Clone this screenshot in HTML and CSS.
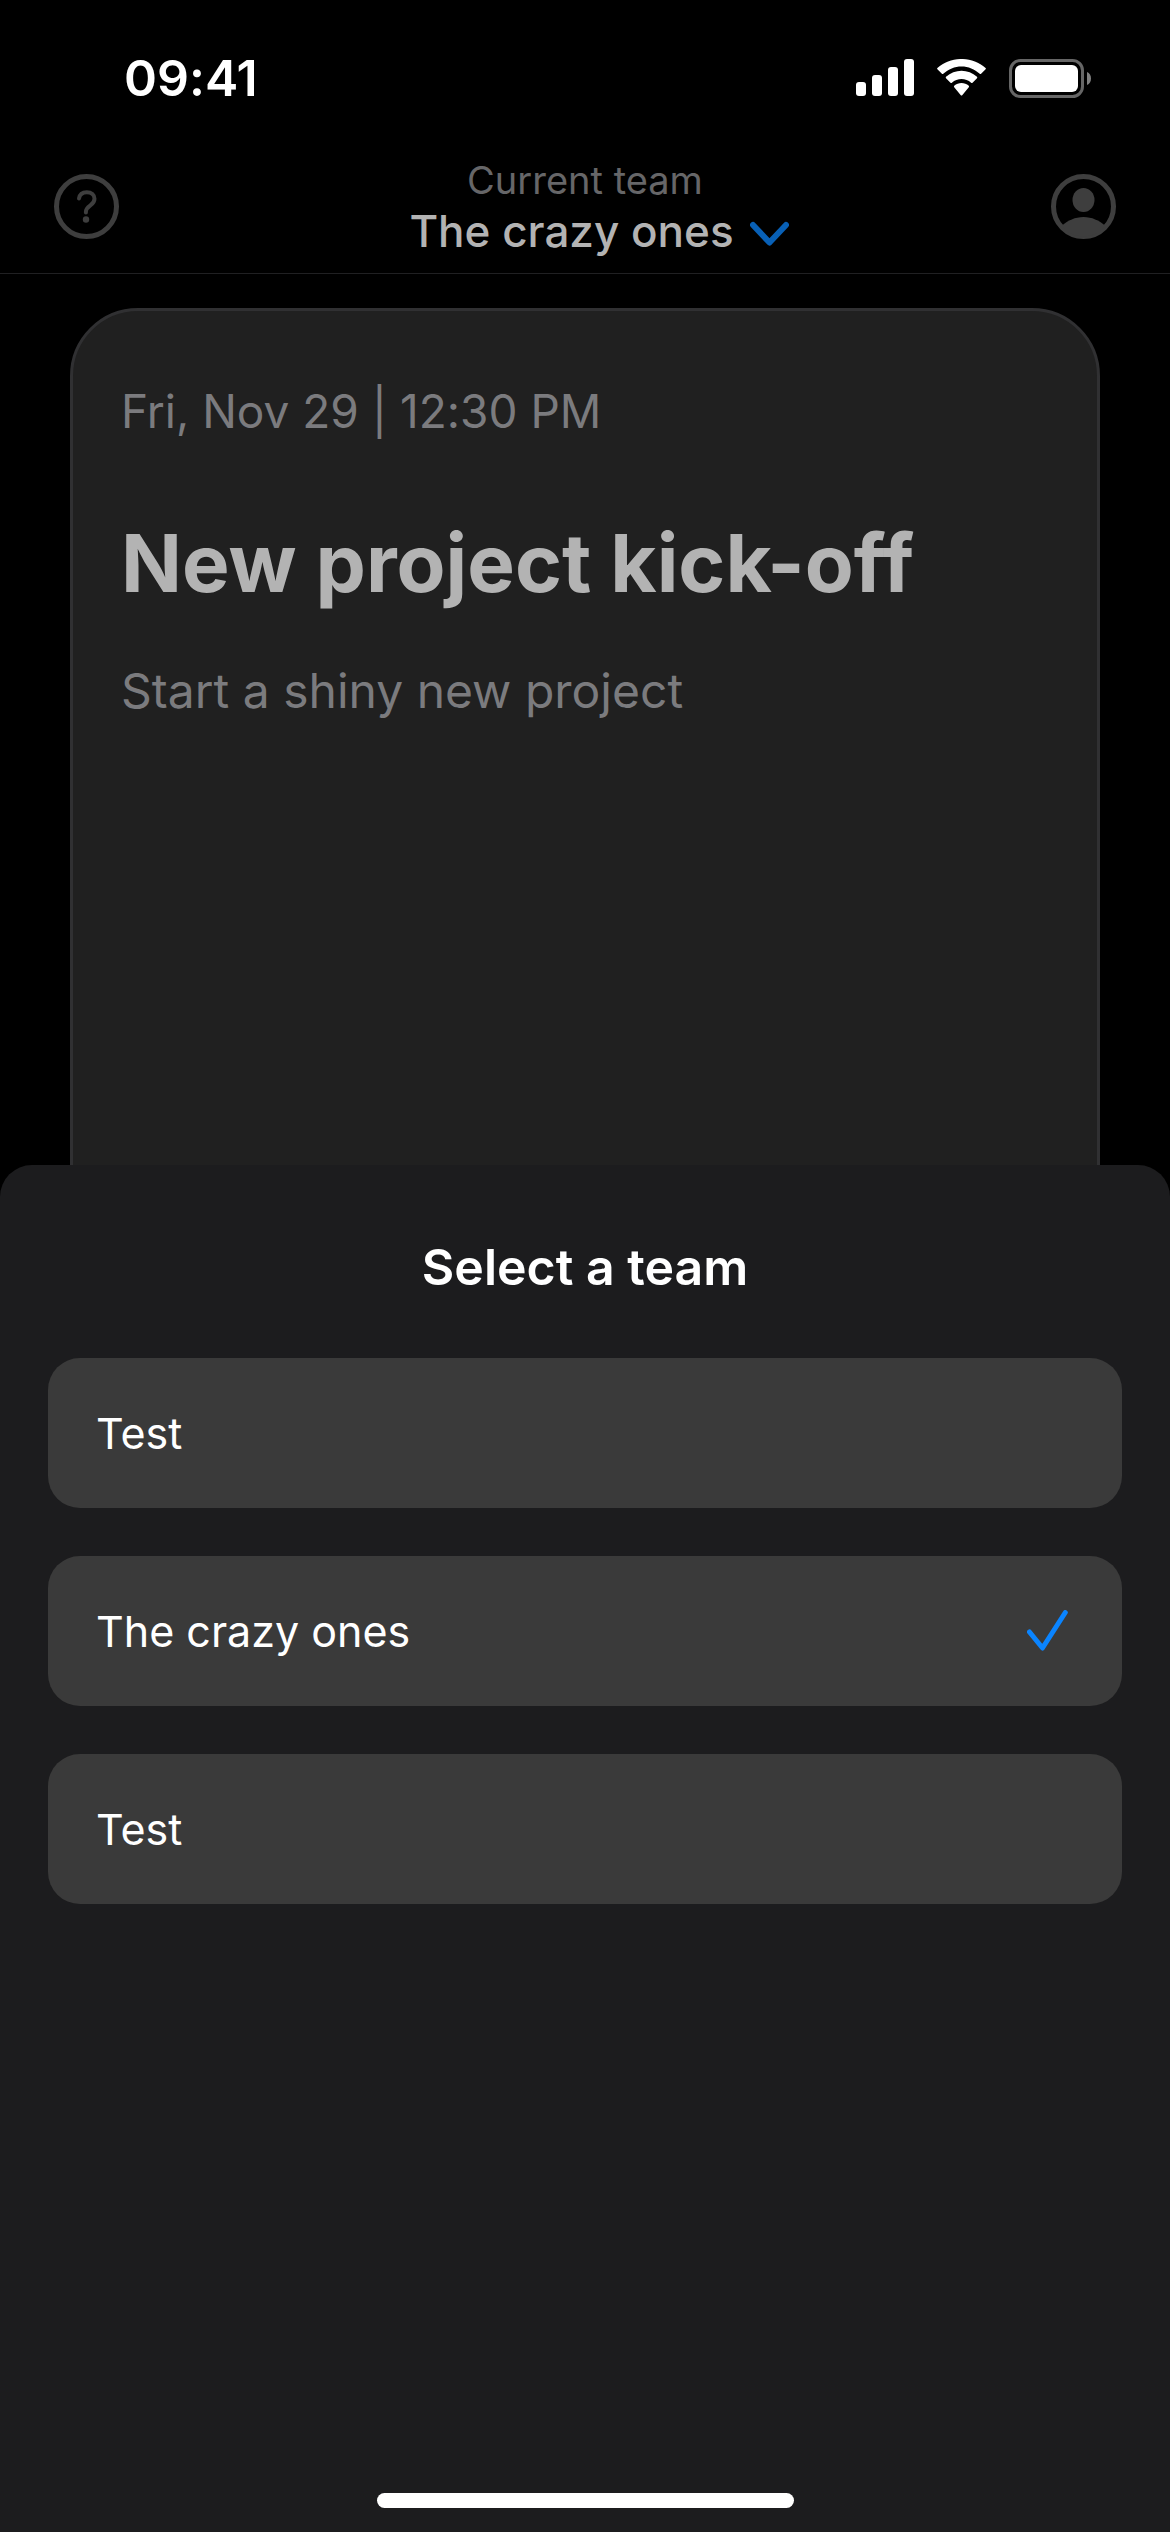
FILE: index.html
```html
<!DOCTYPE html>
<html lang="en">
<head>
  <meta charset="utf-8">
  <meta name="viewport" content="width=device-width, initial-scale=1">
  <title>Select a team</title>
  <link rel="stylesheet" href="styles.css">
</head>
<body>
  <div class="screen">
    <div class="status-bar">
      <time class="status-time">09:41</time>
      <div class="status-icons">
        <svg width="58" height="39" viewBox="0 0 58 39" fill="#fff" aria-hidden="true">
          <rect x="0" y="23" width="10" height="14" rx="3"/>
          <rect x="16" y="16" width="10" height="21" rx="3"/>
          <rect x="32" y="8" width="10" height="29" rx="3"/>
          <rect x="48" y="0" width="10" height="37" rx="3"/>
        </svg>
        <svg width="51" height="39" viewBox="0 0 51 39" fill="#fff" aria-hidden="true">
          <path d="M25.500 7.500c6.800 0 13.200 2.600 18.200 7.300.4.400 1 .4 1.400 0l4.500-4.500c.4-.4.400-1 0-1.400C36.100-3 14.900-3 1.400 8.900c-.4.400-.4 1 0 1.400l4.500 4.500c.4.400 1 .4 1.400 0 5-4.700 11.400-7.300 18.200-7.300z"/>
          <path d="M25.500 20.100c3.500 0 6.900 1.300 9.600 3.700.4.400 1 .4 1.400 0l4.500-4.500c.4-.4.400-1.100 0-1.500-8.700-8.100-22.200-8.100-31 0-.4.400-.4 1.100 0 1.500l4.500 4.500c.4.400 1 .4 1.400 0 2.700-2.400 6.100-3.700 9.600-3.700z"/>
          <path d="M32.800 28.200c.4-.4.400-1.100 0-1.500-4.200-3.600-10.400-3.600-14.600 0-.4.400-.4 1.100 0 1.500l6.600 8c.4.500 1 .5 1.400 0z"/>
        </svg>
        <svg width="83" height="39" viewBox="0 0 83 39" aria-hidden="true">
          <rect x="1.500" y="1.500" width="72" height="36" rx="10" fill="none" stroke="#666" stroke-width="3"/>
          <rect x="6" y="6" width="63" height="27" rx="6" fill="#fff"/>
          <path d="M78 13c2.600 1 4 3.500 4 6.500s-1.400 5.500-4 6.500z" fill="#808080"/>
        </svg>
      </div>
    </div>

    <header class="top-bar">
      <button class="icon-button" type="button" aria-label="Help">
        <svg width="65" height="65" viewBox="0 0 65 65" fill="none" stroke="#3e3e3e" aria-hidden="true">
          <circle cx="32.500" cy="32.500" r="30" stroke-width="5"/>
          <path d="M25 24.500c.6-4 3.600-6.300 7.800-6.300 4.600 0 7.700 2.800 7.700 6.600 0 2.800-1.400 4.800-4.400 6.900-3 2.200-4.200 3.300-4.200 6.100v.6" stroke-width="4" stroke-linecap="round"/>
          <circle cx="32" cy="45.500" r="3.200" fill="#3e3e3e" stroke="none"/>
        </svg>
      </button>
      <button class="team-switch" type="button">
        <span class="team-label">Current team</span>
        <span class="team-name">The crazy ones
          <svg width="39" height="30" viewBox="0 0 39 30" fill="none" stroke="#0860b6" stroke-width="6" stroke-linecap="round" stroke-linejoin="round" aria-hidden="true">
            <path d="M3 9l16.500 17.500L36 9"/>
          </svg>
        </span>
      </button>
      <button class="icon-button" type="button" aria-label="Account">
        <svg width="65" height="65" viewBox="0 0 65 65" fill="#3e3e3e" aria-hidden="true">
          <circle cx="32.500" cy="32.500" r="30" fill="none" stroke="#3e3e3e" stroke-width="5"/>
          <ellipse cx="32.500" cy="26" rx="11" ry="12"/>
          <path d="M11 51.500C17 46.500 24 43 32.500 43S48 46.500 54 51.500C48.500 59 41 62.500 32.500 62.500S16.500 59 11 51.500z"/>
        </svg>
      </button>
    </header>

    <main class="content">
      <article class="card">
        <p class="card-date">Fri, Nov 29 | 12:30 PM</p>
        <h1 class="card-title">New project kick-off</h1>
        <p class="card-text">Start a shiny new project</p>
      </article>
    </main>

    <section class="sheet" role="dialog" aria-labelledby="sheet-title">
      <h2 class="sheet-title" id="sheet-title">Select a team</h2>
      <ul class="team-list">
        <li><button class="team-option" type="button">Test</button></li>
        <li>
          <button class="team-option" type="button" aria-pressed="true">The crazy ones
            <svg width="41" height="41" viewBox="0 0 41 41" fill="none" stroke="#0a84ff" stroke-width="5" stroke-linecap="round" stroke-linejoin="round" aria-hidden="true">
              <path d="M2.500 22l13 16L38.300 2.500"/>
            </svg>
          </button>
        </li>
        <li><button class="team-option" type="button">Test</button></li>
      </ul>
      <div class="home-indicator"></div>
    </section>
  </div>
</body>
</html>
```
FILE: styles.css
```css
* {
  box-sizing: border-box;
}

body {
  margin: 0;
  background: #000;
  color: #fff;
  font-family: Inter, "Liberation Sans", sans-serif;
  font-variant-ligatures: none;
}

h1,
h2,
p,
ul {
  margin: 0;
  padding: 0;
}

ul {
  list-style: none;
}

button {
  padding: 0;
  border: 0;
  background: none;
  color: inherit;
  font: inherit;
}

svg {
  display: block;
  flex: none;
}

.screen {
  position: relative;
  display: flex;
  flex-direction: column;
  min-height: 100vh;
}

.status-bar {
  display: flex;
  align-items: center;
  justify-content: space-between;
  height: 156px;
  padding: 0 78px 0 124px;
}

.status-time {
  font-size: 50px;
  font-weight: 600;
  line-height: 60px;
}

.status-icons {
  display: flex;
  gap: 22px;
}

.top-bar {
  display: flex;
  align-items: center;
  justify-content: space-between;
  height: 118px;
  padding: 0 54px 16px;
  border-bottom: 1px solid #202022;
}

.team-switch {
  display: flex;
  flex-direction: column;
  align-items: center;
}

.team-label {
  color: #666668;
  font-size: 38px;
  line-height: 48px;
}

.team-name {
  display: flex;
  align-items: center;
  gap: 16px;
  padding-left: 28px;
  color: #b3b3b3;
  font-size: 44px;
  font-weight: 500;
  line-height: 54px;
}

.content {
  display: flex;
  flex: 1;
  padding: 34px 70px 0;
}

.card {
  flex: 1;
  padding: 68px 48px;
  border: 3px solid #303032;
  border-radius: 68px 68px 0 0;
  background: #202020;
}

.card-date,
.card-text {
  color: #7b7b7e;
  font-size: 48px;
  line-height: 64px;
}

.card-date {
  font-size: 46px;
}

.card-title {
  margin: 70px 0 46px;
  color: #b3b3b3;
  font-size: 80px;
  font-weight: 700;
  line-height: 100px;
}

.sheet {
  position: absolute;
  right: 0;
  bottom: 0;
  left: 0;
  display: flex;
  flex-direction: column;
  min-height: 54vh;
  padding: 70px 48px 24px;
  border-radius: 32px 32px 0 0;
  background: #1c1c1e;
}

.sheet-title {
  font-size: 50px;
  font-weight: 600;
  line-height: 64px;
  text-align: center;
}

.team-list {
  display: flex;
  flex-direction: column;
  gap: 48px;
  margin: 59px 0 auto;
}

.team-option {
  display: flex;
  align-items: center;
  justify-content: space-between;
  width: 100%;
  height: 150px;
  padding: 0 54px 0 48px;
  border-radius: 32px;
  background: #3a3a3a;
  font-size: 43px;
  line-height: 54px;
}

.home-indicator {
  align-self: center;
  width: 417px;
  height: 15px;
  border-radius: 8px;
  background: #fff;
}
```
